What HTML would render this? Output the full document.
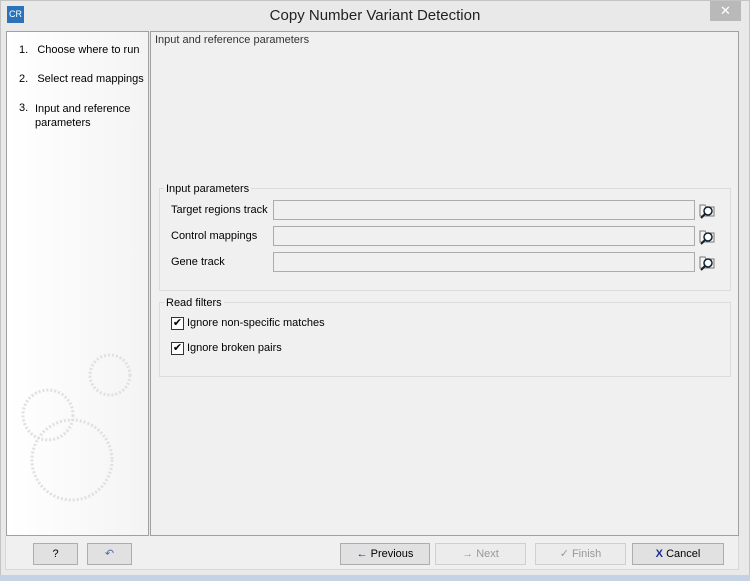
<!DOCTYPE html><html><head><style>
body{margin:0;width:750px;height:581px;background:#e9e9e9;font-family:"Liberation Sans",sans-serif;font-size:11px;color:#000;position:relative;overflow:hidden}
.a{position:absolute}
.btn{position:absolute;top:543px;height:22px;border:1px solid #adadad;background:#e1e1e1;box-sizing:border-box;text-align:center;line-height:20px}
.fs{position:absolute;left:159px;width:572px;border:1px solid #dcdcdc;box-sizing:border-box}
.lg{position:absolute;top:-6px;left:4px;background:#f0f0f0;padding:0 2px}
.tf{position:absolute;left:273px;width:422px;height:20px;border:1px solid #acacac;background:#f0f0f0;box-sizing:border-box}
.lb{position:absolute;left:171px}
.ic{position:absolute;left:698px}
.cb{position:absolute;left:171px;width:13px;height:13px;border:1px solid #333;background:#fff;box-sizing:border-box;font-size:11px;line-height:11px;text-align:center}
</style></head><body>
<div class="a" style="left:0;top:0;width:750px;height:581px;border:1px solid #c4c4c4;box-sizing:border-box"></div>
<div class="a" style="left:7px;top:6px;width:17px;height:17px;background:#2b72b8;color:#fff;font-size:9px;line-height:17px;text-align:center">CR</div>
<div class="a" style="left:0;width:750px;top:7px;text-align:center;font-size:15px;color:#222">Copy Number Variant Detection</div>
<div class="a" style="left:710px;top:1px;width:31px;height:20px;background:#b9b9b9;color:#fff;text-align:center;line-height:20px;font-size:13px">✕</div>
<div class="a" style="left:6px;top:31px;width:143px;height:505px;border:1px solid #a0a0a0;background:linear-gradient(90deg,#fff,#f4f4f4);box-sizing:border-box"></div>
<div class="a" style="left:19px;top:44px">1.&nbsp;&nbsp; Choose where to run</div>
<div class="a" style="left:19px;top:73px">2.&nbsp;&nbsp; Select read mappings</div>
<div class="a" style="left:19px;top:102px">3.</div>
<div class="a" style="left:35px;top:102px;line-height:14px">Input and reference<br>parameters</div>
<svg class="a" style="left:10px;top:340px" width="130" height="195"><g fill="none" stroke="#e0e0e0" stroke-width="3" stroke-dasharray="2 2"><circle cx="62" cy="120" r="40"/><circle cx="38" cy="75" r="25"/><circle cx="100" cy="35" r="20"/></g></svg>
<div class="a" style="left:150px;top:31px;width:589px;height:505px;border:1px solid #a0a0a0;background:#f0f0f0;box-sizing:border-box"></div>
<div class="a" style="left:155px;top:34px;color:#333">Input and reference parameters</div>
<div class="fs" style="top:188px;height:103px"><span class="lg">Input parameters</span></div>
<div class="fs" style="top:302px;height:75px"><span class="lg">Read filters</span></div>
<div class="lb" style="top:204px">Target regions track</div><div class="tf" style="top:200px"></div>
<div class="lb" style="top:230px">Control mappings</div><div class="tf" style="top:226px"></div>
<div class="lb" style="top:256px">Gene track</div><div class="tf" style="top:252px"></div>
<svg class="ic" style="top:201px" width="18" height="18"><path d="M2 4h5l1 2h8v9H2z" fill="#f6f6f6" stroke="#777"/><circle cx="10" cy="10" r="4" fill="#fff" stroke="#123" stroke-width="1.5"/><path d="M7 13l-4 4" stroke="#123" stroke-width="2"/></svg>
<svg class="ic" style="top:227px" width="18" height="18"><path d="M2 4h5l1 2h8v9H2z" fill="#f6f6f6" stroke="#777"/><circle cx="10" cy="10" r="4" fill="#fff" stroke="#123" stroke-width="1.5"/><path d="M7 13l-4 4" stroke="#123" stroke-width="2"/></svg>
<svg class="ic" style="top:253px" width="18" height="18"><path d="M2 4h5l1 2h8v9H2z" fill="#f6f6f6" stroke="#777"/><circle cx="10" cy="10" r="4" fill="#fff" stroke="#123" stroke-width="1.5"/><path d="M7 13l-4 4" stroke="#123" stroke-width="2"/></svg>
<div class="cb" style="top:317px">✔</div><div class="a" style="left:187px;top:317px">Ignore non-specific matches</div>
<div class="cb" style="top:342px">✔</div><div class="a" style="left:187px;top:342px">Ignore broken pairs</div>
<div class="a" style="left:5px;top:536px;width:734px;height:34px;border:1px solid #d8d8d8;border-top:none;background:#f0f0f0;box-sizing:border-box"></div>
<div class="btn" style="left:33px;width:45px">?</div>
<div class="btn" style="left:87px;width:45px;color:#4a6fa5">↶</div>
<div class="btn" style="left:340px;width:90px"><b style="color:#1a2f8a">←</b> Previous</div>
<div class="btn" style="left:435px;width:91px;color:#999;border-color:#d0d0d0;background:#ececec">→ Next</div>
<div class="btn" style="left:535px;width:91px;color:#999;border-color:#d0d0d0;background:#ececec">✓ Finish</div>
<div class="btn" style="left:632px;width:92px"><b style="color:#1a2f8a">X</b> Cancel</div>
<div class="a" style="left:0;top:575px;width:750px;height:6px;background:#c4d2e4"></div>
</body></html>
